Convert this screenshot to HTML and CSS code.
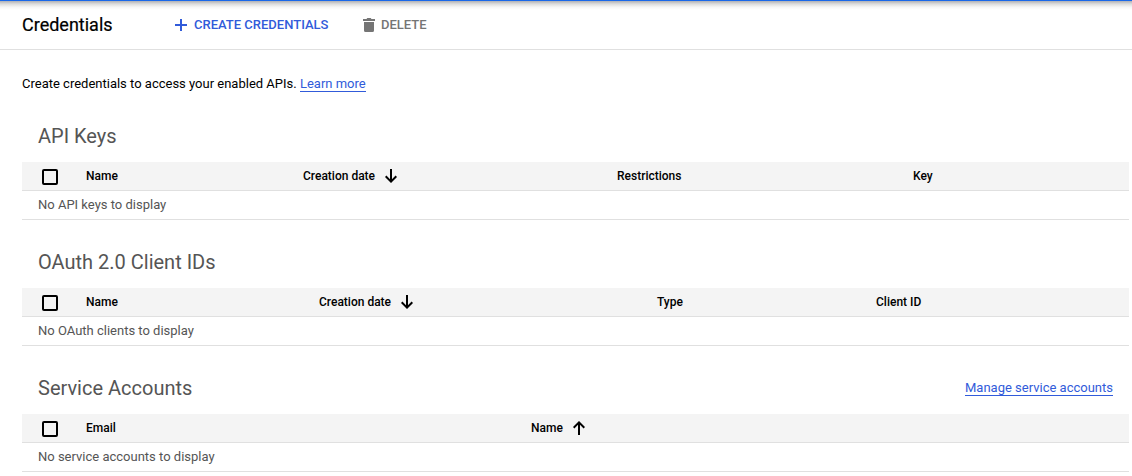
FILE: index.html
```html
<!DOCTYPE html>
<html lang="en">
<head>
<meta charset="utf-8">
<title>Credentials</title>
<link rel="stylesheet" href="styles.css">
</head>
<body>
<header class="toolbar">
  <h1 class="title">Credentials</h1>
  <button class="action create"><svg class="plus" viewBox="0 0 12 12"><path d="M6 0v12M0 6h12"/></svg>CREATE CREDENTIALS</button>
  <button class="action delete"><svg class="trash" viewBox="0 0 12 14"><path d="M0 1h3.500l.8-1h3.400l.8 1H12v2H0zM1 4h10v8.500a1.500 1.500 0 0 1-1.500 1.500h-7A1.500 1.500 0 0 1 1 12.500z"/></svg>DELETE</button>
</header>
<main class="content">
  <p class="intro">Create credentials to access your enabled APIs. <a class="link" href="#">Learn more</a></p>
  <section class="section">
    <div class="heading"><h2>API Keys</h2></div>
    <div class="row keys"><span class="box"></span><span>Name</span><span class="sorted">Creation date<svg class="arrow" viewBox="0 0 12 14"><path d="M6 0v12.500M.7 7.300L6 12.600l5.300-5.300"/></svg></span><span>Restrictions</span><span>Key</span></div>
    <div class="empty">No API keys to display</div>
  </section>
  <section class="section">
    <div class="heading"><h2>OAuth 2.0 Client IDs</h2></div>
    <div class="row clients"><span class="box"></span><span>Name</span><span class="sorted">Creation date<svg class="arrow" viewBox="0 0 12 14"><path d="M6 0v12.500M.7 7.300L6 12.600l5.300-5.300"/></svg></span><span>Type</span><span>Client ID</span></div>
    <div class="empty">No OAuth clients to display</div>
  </section>
  <section class="section">
    <div class="heading"><h2>Service Accounts</h2><a class="link manage" href="#">Manage service accounts</a></div>
    <div class="row accounts"><span class="box"></span><span>Email</span><span class="sorted">Name<svg class="arrow" viewBox="0 0 12 14"><path d="M6 14V1.500M.7 6.700L6 1.400l5.300 5.300"/></svg></span></div>
    <div class="empty">No service accounts to display</div>
  </section>
</main>
</body>
</html>
```

FILE: styles.css
```css
* { box-sizing: border-box; }
body { margin: 0; height: 476px; overflow: hidden; background: #fff; color: #000; font-family: Roboto, sans-serif; font-size: 13px; }
.toolbar { display: flex; align-items: center; height: 50px; padding-left: 22px; border-top: 1px solid #1967e8; border-bottom: 1px solid #e0e0e0; background: linear-gradient(#b0b0b4, #dcdcdc 3px, #f5f5f5 6px, #fff 9px); }
.title { margin: 0; width: 153px; font-size: 18px; font-weight: 400; line-height: 24px; -webkit-text-stroke: .2px #000; }
.action { display: flex; align-items: center; padding: 0; border: 0; background: none; font: 500 13px/20px Roboto, sans-serif; white-space: nowrap; }
.create { width: 188px; color: #315bda; }
.delete { color: #757575; }
.plus { width: 12px; height: 12px; margin-right: 7px; fill: none; stroke: currentColor; stroke-width: 2; }
.trash { width: 12px; height: 14px; margin-right: 6px; fill: currentColor; }
.content { padding: 24px 3px 0 22px; }
.intro { margin: 0; height: 36px; line-height: 20px; }
.link { color: #315bda; text-decoration: none; border-bottom: 1px solid currentColor; }
.section { height: 126px; }
.heading { display: flex; justify-content: space-between; align-items: center; height: 52px; padding: 0 16px; }
.heading h2 { margin: 0; font-size: 20px; font-weight: 400; line-height: 28px; color: #555; }
.manage { line-height: 15px; }
.row { display: grid; align-items: center; height: 29px; padding-left: 20px; border-bottom: 1px solid #e0e0e0; background: #f4f4f4; font-size: 12px; font-weight: 500; }
.keys { grid-template-columns: 44px 217px 314px 296px 1fr; }
.clients { grid-template-columns: 44px 233px 338px 219px 1fr; }
.accounts { grid-template-columns: 44px 445px 1fr; }
.box { width: 16px; height: 16px; margin-top: 2px; border: 2px solid #000; border-radius: 2px; }
.sorted { display: flex; align-items: center; }
.arrow { width: 12px; height: 14px; margin-left: 10px; fill: none; stroke: #000; stroke-width: 2; }
.empty { height: 29px; padding-left: 16px; border-bottom: 1px solid #e0e0e0; line-height: 28px; color: #555; }
```
